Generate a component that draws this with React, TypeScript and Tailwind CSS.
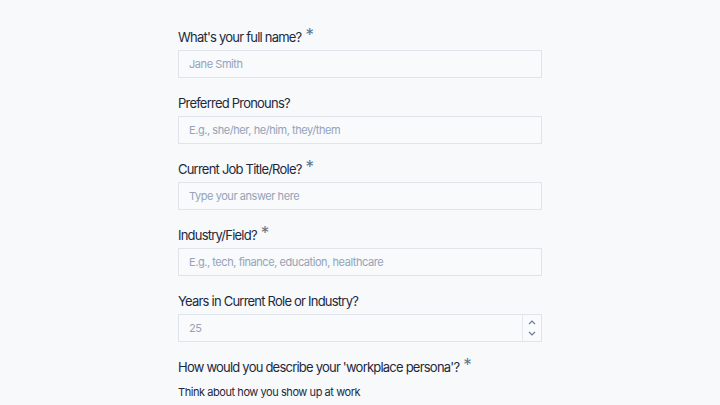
import React from "react";

const Label = ({ text, req }: { text: string; req?: boolean }) => (
  <div className="flex items-start h-[20px] mb-[3px] text-[13px] leading-[20px] tracking-[-0.06em] text-[#1e293b]">
    <span>{text}</span>
    {req && <span className="ml-[4px] text-[17px] leading-[16px] tracking-normal text-[#64748b]">*</span>}
  </div>
);

const Input = ({ ph }: { ph: string }) => (
  <div className="h-[28px] border border-[#dfe4ea] bg-[#f8fafc] flex items-center px-[10px] text-[11px] tracking-[-0.04em] text-[#94a3b8]">
    {ph}
  </div>
);

export default function App() {
  return (
    <div className="w-[720px] h-[405px] overflow-hidden bg-[#f7f9fb] font-['Inter',sans-serif]">
      <div className="w-[364px] ml-[178px] pt-[27px] flex flex-col gap-[15px]">
        <div>
          <Label text="What's your full name?" req />
          <Input ph="Jane Smith" />
        </div>
        <div>
          <Label text="Preferred Pronouns?" />
          <Input ph="E.g., she/her, he/him, they/them" />
        </div>
        <div>
          <Label text="Current Job Title/Role?" req />
          <Input ph="Type your answer here" />
        </div>
        <div>
          <Label text="Industry/Field?" req />
          <Input ph="E.g., tech, finance, education, healthcare" />
        </div>
        <div>
          <Label text="Years in Current Role or Industry?" />
          <div className="h-[28px] border border-[#dfe4ea] bg-[#f8fafc] flex items-stretch text-[11px] tracking-[-0.04em] text-[#94a3b8]">
            <div className="flex-1 flex items-center px-[10px]">25</div>
            <div className="w-[19px] border-l border-[#e5e9ee] flex flex-col items-center justify-between py-[5px] text-[#64748b]">
              <svg width="8" height="5" viewBox="0 0 8 5" fill="none" stroke="currentColor" strokeWidth="1.2"><path d="M1 4.2 4 1.2 7 4.2" /></svg>
              <svg width="8" height="5" viewBox="0 0 8 5" fill="none" stroke="currentColor" strokeWidth="1.2"><path d="M1 0.8 4 3.8 7 0.8" /></svg>
            </div>
          </div>
        </div>
        <div>
          <Label text="How would you describe your 'workplace persona'?" req />
          <div className="mt-[7px] text-[11px] leading-[16px] tracking-[-0.04em] text-[#1e293b]">Think about how you show up at work</div>
        </div>
      </div>
    </div>
  );
}
